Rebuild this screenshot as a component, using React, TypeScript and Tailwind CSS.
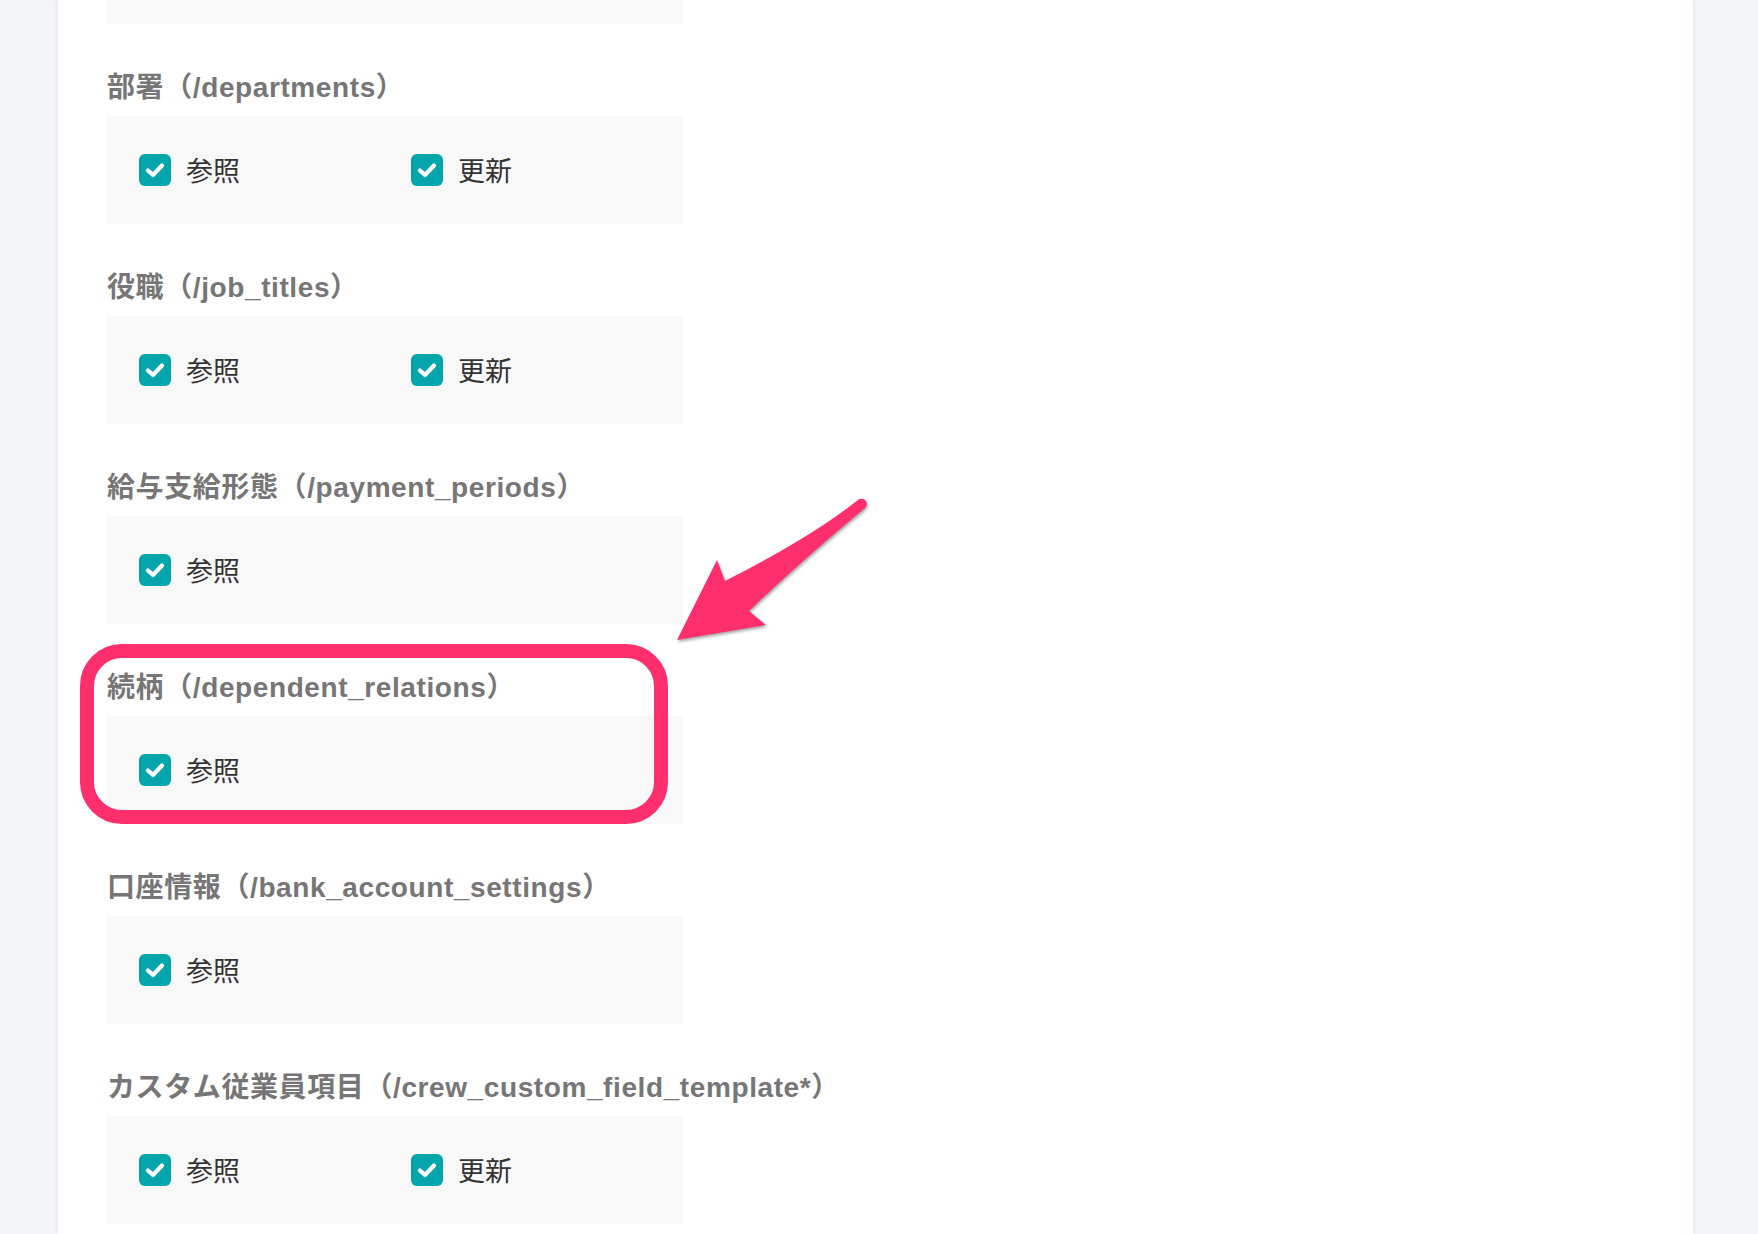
import React from "react";

type Section = { title: string; update: boolean };

const sections: Section[] = [
  { title: "部署（/departments）", update: true },
  { title: "役職（/job_titles）", update: true },
  { title: "給与支給形態（/payment_periods）", update: false },
  { title: "続柄（/dependent_relations）", update: false },
  { title: "口座情報（/bank_account_settings）", update: false },
  { title: "カスタム従業員項目（/crew_custom_field_template*）", update: true },
];

function Check({ label }: { label: string }) {
  return (
    <div className="flex w-[272px] items-center gap-[15px]">
      <div className="flex h-[32px] w-[32px] items-center justify-center rounded-[6px] bg-[#00a6ac]">
        <svg width="24" height="24" viewBox="0 0 24 24" fill="none">
          <path d="M5 12.5 L10 17 L19 7.5" stroke="#ffffff" strokeWidth="4.2" strokeLinecap="round" strokeLinejoin="round" />
        </svg>
      </div>
      <span className="text-[27px] leading-[32px] text-[#333333]">{label}</span>
    </div>
  );
}

export default function App() {
  return (
    <div
      className="relative h-[1234px] w-[1758px] overflow-hidden bg-[#f4f5f9]"
      style={{ fontFamily: '"Noto Sans CJK JP", "Noto Sans", sans-serif' }}
    >
      <div className="ml-[58px] h-[1234px] w-[1635px] bg-white pl-[49px] shadow-[0_0_6px_rgba(0,0,0,0.08)]">
        <div className="h-[24px] w-[576px] bg-[#f8f8f8]" />
        {sections.map((s) => (
          <div key={s.title}>
            <div
              className="mb-[10px] mt-[46px] h-[36px] whitespace-nowrap text-[28px] font-bold leading-[36px] tracking-[0.6px] text-[#767676]"
              style={{ fontFamily: '"Liberation Sans", "Noto Sans CJK JP", sans-serif' }}
            >
              {s.title}
            </div>
            <div className="flex h-[108px] w-[576px] items-center bg-[#f8f8f8] pl-[32px]">
              <Check label="参照" />
              {s.update && <Check label="更新" />}
            </div>
          </div>
        ))}
      </div>

      <div className="absolute left-[80px] top-[644px] h-[180px] w-[588px] rounded-[42px] border-[14px] border-[#ff2f6e]" />

      <svg
        className="absolute left-[660px] top-[490px]"
        width="220"
        height="160"
        viewBox="0 0 220 160"
        style={{ filter: "drop-shadow(1px 2px 1.5px rgba(0,0,0,0.35))" }}
      >
        <path
          d="M 198 10 Q 150 48 65 91 L 57 70 L 17 150 L 106 135 L 89 121 Q 140 72 205 18 A 4.8 4.8 0 0 0 198 10 Z"
          fill="#ff2f6e"
        />
      </svg>
    </div>
  );
}
